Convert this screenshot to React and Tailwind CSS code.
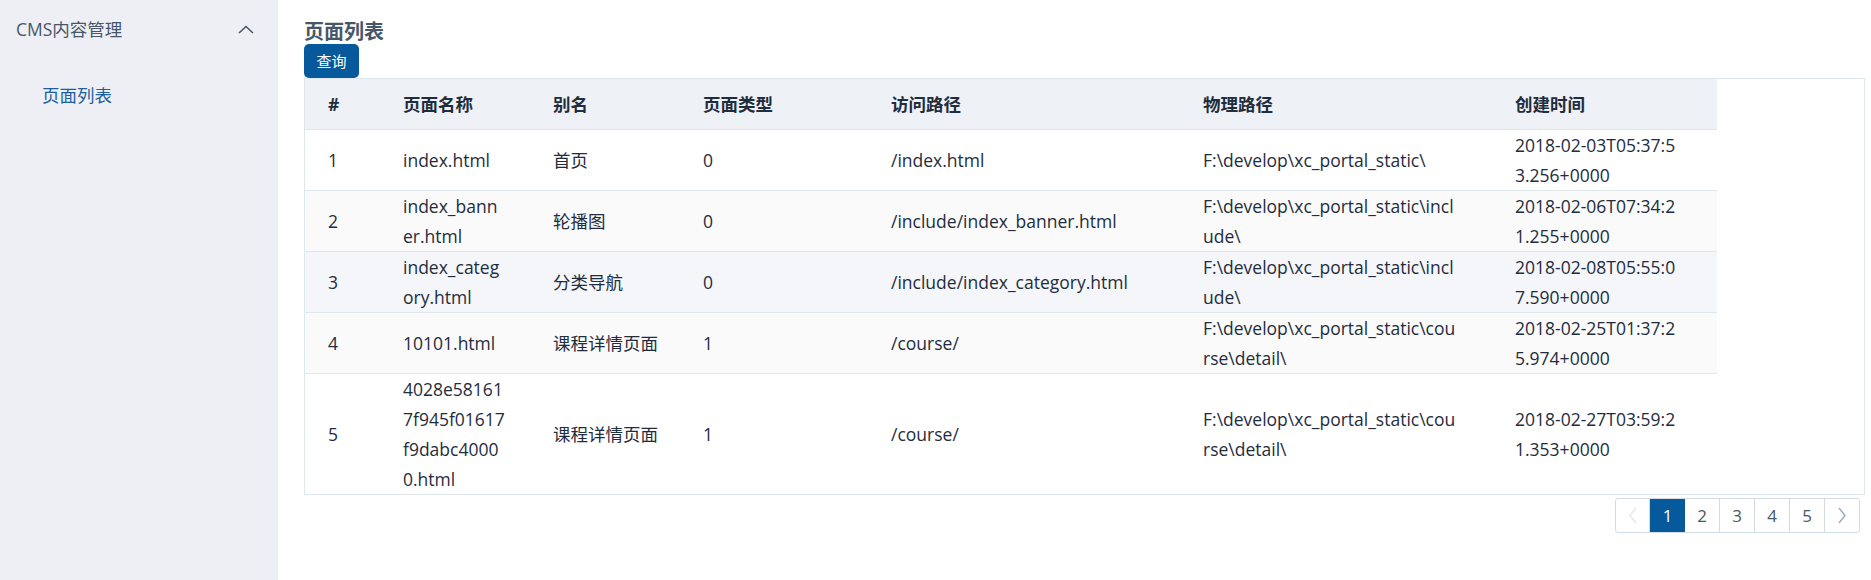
import React from "react";

const font = { fontFamily: "'Open Sans', 'Noto Sans CJK SC', sans-serif" };

const columns = [
  { title: "#", w: "w-[75px]" },
  { title: "页面名称", w: "w-[150px]" },
  { title: "别名", w: "w-[150px]" },
  { title: "页面类型", w: "w-[188px]" },
  { title: "访问路径", w: "w-[312px]" },
  { title: "物理路径", w: "w-[312px]" },
  { title: "创建时间", w: "w-[225px]" },
];

const rows = [
  {
    bg: "bg-white",
    cells: [
      ["1"],
      ["index.html"],
      ["首页"],
      ["0"],
      ["/index.html"],
      ["F:\\develop\\xc_portal_static\\"],
      ["2018-02-03T05:37:5", "3.256+0000"],
    ],
  },
  {
    bg: "bg-[#fafafa]",
    cells: [
      ["2"],
      ["index_bann", "er.html"],
      ["轮播图"],
      ["0"],
      ["/include/index_banner.html"],
      ["F:\\develop\\xc_portal_static\\incl", "ude\\"],
      ["2018-02-06T07:34:2", "1.255+0000"],
    ],
  },
  {
    bg: "bg-[#f4f6fa]",
    cells: [
      ["3"],
      ["index_categ", "ory.html"],
      ["分类导航"],
      ["0"],
      ["/include/index_category.html"],
      ["F:\\develop\\xc_portal_static\\incl", "ude\\"],
      ["2018-02-08T05:55:0", "7.590+0000"],
    ],
  },
  {
    bg: "bg-[#fafafa]",
    cells: [
      ["4"],
      ["10101.html"],
      ["课程详情页面"],
      ["1"],
      ["/course/"],
      ["F:\\develop\\xc_portal_static\\cou", "rse\\detail\\"],
      ["2018-02-25T01:37:2", "5.974+0000"],
    ],
  },
  {
    bg: "bg-white",
    last: true,
    cells: [
      ["5"],
      ["4028e58161", "7f945f01617", "f9dabc4000", "0.html"],
      ["课程详情页面"],
      ["1"],
      ["/course/"],
      ["F:\\develop\\xc_portal_static\\cou", "rse\\detail\\"],
      ["2018-02-27T03:59:2", "1.353+0000"],
    ],
  },
];

const Chevron = ({ dir, color }) => {
  const pts = dir === "left" ? "7,1 1,8.5 7,16" : "1,1 7,8.5 1,16";
  return (
    <svg width="8" height="17" viewBox="0 0 8 17" fill="none">
      <polyline points={pts} stroke={color} strokeWidth="1.4" />
    </svg>
  );
};

const App = () => {
  return (
    <div className="flex min-h-screen bg-white" style={font}>
      {/* sidebar */}
      <aside className="w-[278px] shrink-0 bg-[#eeeff4]">
        <div className="h-[58px] flex items-center justify-between pl-[16px] pr-[24px] text-[17.5px] text-[#48576a]">
          <span>CMS内容管理</span>
          <svg width="16" height="9" viewBox="0 0 16 9" fill="none">
            <polyline points="1,8 8,1.5 15,8" stroke="#48576a" strokeWidth="1.6" />
          </svg>
        </div>
        <div className="h-[74px] flex items-center pl-[42px] text-[17.5px] text-[#1c5e9e]">
          页面列表
        </div>
      </aside>

      {/* main */}
      <main className="flex-1 pt-[20px] pl-[26px] pr-[6px]">
        <h2 className="text-[20px] leading-[24px] font-bold text-[#475669]">页面列表</h2>
        <button className="w-[55px] h-[34px] rounded-[5px] bg-[#065a9c] text-white text-[15px] leading-none">
          查询
        </button>

        <div className="border border-[#dfe6ec] text-[17.5px] text-[#1f2d3d]">
          <div className="flex w-[1412px] h-[51px] bg-[#eef1f6] border-b border-[#dfe6ec] font-bold">
            {columns.map((c) => (
              <div key={c.title} className={`${c.w} shrink-0 px-[23px] flex items-center`}>
                {c.title}
              </div>
            ))}
          </div>
          {rows.map((r, i) => (
            <div
              key={i}
              className={`flex w-[1412px] ${r.bg} ${r.last ? "" : "border-b border-[#dfe6ec]"}`}
            >
              {r.cells.map((lines, j) => (
                <div
                  key={j}
                  className={`${columns[j].w} shrink-0 px-[23px] min-h-[60px] flex flex-col justify-center leading-[30px]`}
                >
                  {lines.map((l) => (
                    <span key={l} className="whitespace-nowrap">
                      {l}
                    </span>
                  ))}
                </div>
              ))}
            </div>
          ))}
        </div>

        {/* pagination */}
        <div className="flex justify-end mt-[3px] pr-[5px]">
          <div className="flex h-[35px] border border-[#d1dbe5] rounded-[3px] text-[17px] text-[#48576a]">
            <div className="w-[34px] flex items-center justify-center border-r border-[#d1dbe5]">
              <Chevron dir="left" color="#e4e8ee" />
            </div>
            <div className="w-[35px] flex items-center justify-center bg-[#065a9c] text-white">1</div>
            {["2", "3", "4", "5"].map((n) => (
              <div key={n} className="w-[35px] flex items-center justify-center border-r border-[#d1dbe5]">
                {n}
              </div>
            ))}
            <div className="w-[34px] flex items-center justify-center">
              <Chevron dir="right" color="#97a8be" />
            </div>
          </div>
        </div>
      </main>
    </div>
  );
};

export default App;
